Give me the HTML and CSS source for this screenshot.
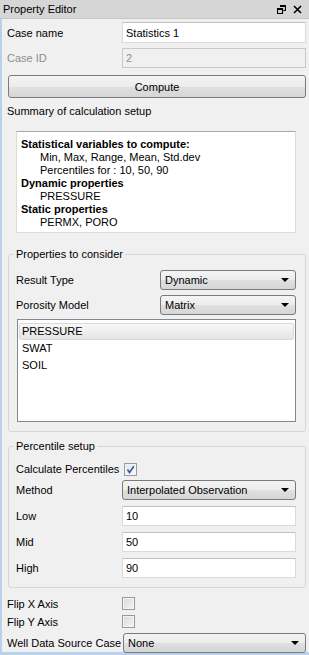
FILE: index.html
```html
<!DOCTYPE html>
<html>
<head>
<meta charset="utf-8">
<link rel="stylesheet" href="styles.css">
</head>
<body>
<div class="titlebar">
  <span class="title">Property Editor</span>
  <span class="tb-icons">
    <svg width="9" height="9" viewBox="0 0 9 9"><path d="M3 0.5H8.5V5.5H6.5M0.5 3.5H5.5V8.5H0.5Z M0.5 4.5H5.5 M3 1.5H8.5" fill="none" stroke="#000" stroke-width="1.2"/></svg>
    <svg width="9" height="9" viewBox="0 0 9 9"><path d="M1 1L8 8M8 1L1 8" stroke="#000" stroke-width="1.6"/></svg>
  </span>
</div>
<div class="panel">
  <div class="row r-case">
    <span class="lbl w115">Case name</span>
    <div class="edit">Statistics 1</div>
  </div>
  <div class="row r-id">
    <span class="lbl w115 dis">Case ID</span>
    <div class="edit ro">2</div>
  </div>
  <div class="button">Compute</div>
  <div class="summary-lbl">Summary of calculation setup</div>
  <div class="summary">
    <div class="b">Statistical variables to compute:</div>
    <div class="ind">Min, Max, Range, Mean, Std.dev</div>
    <div class="ind">Percentiles for : 10, 50, 90</div>
    <div class="b">Dynamic properties</div>
    <div class="ind">PRESSURE</div>
    <div class="b">Static properties</div>
    <div class="ind">PERMX, PORO</div>
  </div>

  <div class="group g1">
    <div class="gtitle">Properties to consider</div>
    <div class="row r-combo first">
      <span class="lbl w144">Result Type</span>
      <div class="combo">Dynamic<span class="arrow"></span></div>
    </div>
    <div class="row r-combo second">
      <span class="lbl w144">Porosity Model</span>
      <div class="combo">Matrix<span class="arrow"></span></div>
    </div>
    <div class="list">
      <div class="item sel">PRESSURE</div>
      <div class="item">SWAT</div>
      <div class="item">SOIL</div>
    </div>
  </div>

  <div class="group g2">
    <div class="gtitle">Percentile setup</div>
    <div class="row r-check">
      <span class="lbl w108">Calculate Percentiles</span>
      <span class="check on"><svg width="9" height="9" viewBox="0 0 9 9"><path d="M1.5 4.5L3.5 7.5L7.8 1.2" fill="none" stroke="#3b5aa5" stroke-width="1.6"/></svg></span>
    </div>
    <div class="row r-method">
      <span class="lbl w106">Method</span>
      <div class="combo">Interpolated Observation<span class="arrow"></span></div>
    </div>
    <div class="row r-num">
      <span class="lbl w106">Low</span>
      <div class="edit">10</div>
    </div>
    <div class="row r-num">
      <span class="lbl w106">Mid</span>
      <div class="edit">50</div>
    </div>
    <div class="row r-num">
      <span class="lbl w106">High</span>
      <div class="edit">90</div>
    </div>
  </div>

  <div class="row r-flip fx">
    <span class="lbl w115">Flip X Axis</span>
    <span class="check"></span>
  </div>
  <div class="row r-flip fy">
    <span class="lbl w115">Flip Y Axis</span>
    <span class="check"></span>
  </div>
  <div class="row r-well">
    <span class="lbl w116">Well Data Source Case</span>
    <div class="combo">None<span class="arrow"></span></div>
  </div>
</div>
</body>
</html>
```

FILE: styles.css
```css
* { box-sizing: border-box; }
html, body { margin: 0; padding: 0; }
body {
  width: 309px;
  height: 655px;
  overflow: hidden;
  background: #f0f0f0;
  font-family: "Liberation Sans", Arial, sans-serif;
  font-size: 11px;
  color: #000;
}
.titlebar {
  height: 19px;
  background: #d6d6d6;
  border-bottom: 1px solid #c6c6c6;
  display: flex;
  align-items: center;
  padding: 0 7px 0 3px;
}
.title { flex: 1; }
.tb-icons { display: flex; gap: 7px; align-items: center; }
.tb-icons svg { display: block; }

.panel {
  height: 636px;
  border-left: 2px solid #b9d1ea;
  border-bottom: 3px solid #b9d1ea;
  padding: 3px 3px 0 5px;
}
.row { display: flex; align-items: center; }
.lbl { flex: none; white-space: nowrap; }
.w115 { width: 115px; }
.w116 { width: 116px; }
.w144 { width: 144px; }
.w108 { width: 108px; }
.w106 { width: 106px; }
.dis { color: #8d8d8d; }

.edit {
  flex: 1;
  height: 100%;
  background: #fff;
  border: 1px solid #dadada;
  border-top-color: #c0c0c0;
  padding: 0 3px;
  display: flex;
  align-items: center;
}
.edit.ro { background: #f0f0f0; color: #8d8d8d; border-color: #c8c8c8; }
.r-case { height: 21px; }
.r-id { height: 20px; margin-top: 5px; }

.button {
  margin: 7px 0 0 1px;
  height: 23px;
  border: 1px solid #7a7a7a;
  border-radius: 3px;
  background: linear-gradient(#f4f4f4 0%, #ececec 50%, #e0e0e0 51%, #d6d6d6 100%);
  display: flex;
  align-items: center;
  justify-content: center;
}
.summary-lbl { margin-top: 6px; height: 14px; line-height: 14px; }
.summary {
  margin: 13px 10px 0 9px;
  height: 102px;
  background: #fff;
  border: 1px solid #dcdcdc;
  border-top-color: #a8a8a8;
  padding: 6px 4px 0 4px;
  line-height: 13px;
}
.summary .b { font-weight: bold; }
.summary .ind { padding-left: 19px; }

.group {
  margin-left: 1px;
  border: 1px solid #d4d7da;
  border-radius: 3px;
  padding: 0 9px 0 7px;
}
.gtitle {
  width: fit-content;
  margin: -8px 0 0 -2px;
  padding: 0 2px;
  height: 14px;
  line-height: 14px;
  background: #f0f0f0;
}
.g1 { margin-top: 21px; height: 178px; }
.g2 { margin-top: 14px; height: 142px; }

.combo {
  flex: 1;
  height: 100%;
  border: 1px solid #7a7a7a;
  border-radius: 3px;
  background: linear-gradient(#f4f4f4 0%, #ececec 50%, #e0e0e0 51%, #d6d6d6 100%);
  display: flex;
  align-items: center;
  padding: 0 0 0 4px;
  white-space: nowrap;
}
.arrow {
  margin-left: auto;
  margin-right: 6px;
  width: 0;
  height: 0;
  border-left: 4px solid transparent;
  border-right: 4px solid transparent;
  border-top: 4px solid #000;
}
.r-combo { height: 20px; }
.r-combo.first { margin-top: 9px; }
.r-combo.second { margin-top: 5px; }

.list {
  margin: 4px 0 0 1px;
  height: 103px;
  background: #fff;
  border: 1px solid #828790;
  padding: 3px 1px;
}
.item { height: 17px; line-height: 17px; padding-left: 3px; }
.item.sel {
  border: 1px solid #d9d9d9;
  border-radius: 2px;
  background: linear-gradient(#f8f8f8, #e5e5e5);
  line-height: 15px;
  padding-left: 2px;
}

.check {
  width: 13px;
  height: 13px;
  border: 1px solid #9a9a9a;
  background: linear-gradient(135deg, #d8d8d8, #f6f6f6);
  box-shadow: inset 0 0 0 1px #f4f4f4;
  display: flex;
  align-items: center;
  justify-content: center;
}
.check svg { display: block; }
.check.on { background: linear-gradient(135deg, #dfe6f2, #f8f9fc); }
.r-check { height: 14px; margin-top: 9px; }
.r-method { height: 20px; margin-top: 4px; }
.r-num { height: 20px; margin-top: 6px; }
.r-flip { height: 13px; }
.fx { margin-top: 9px; }
.fy { margin-top: 5px; }
.r-well { height: 20px; margin-top: 5px; }
```
